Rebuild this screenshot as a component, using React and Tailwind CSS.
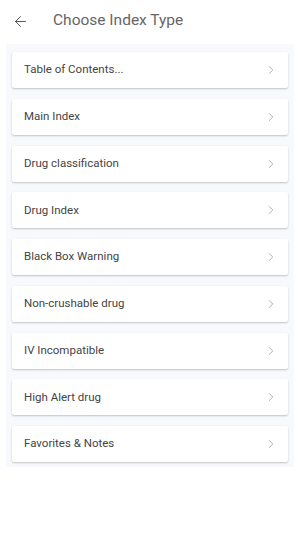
import { ArrowLeft, ChevronRight } from 'lucide-react';

const items = [
    'Table of Contents...',
    'Main Index',
    'Drug classification',
    'Drug Index',
    'Black Box Warning',
    'Non-crushable drug',
    'IV Incompatible',
    'High Alert drug',
    'Favorites & Notes',
];

export default function App() {
    return (
        <div className="w-[300px] h-[533px] bg-white font-['Roboto',sans-serif]">
            <header className="h-[42px] flex items-center">
                <ArrowLeft size={17} strokeWidth={1.4} className="ml-[12px] text-[#555]" />
                <h1 className="ml-[24px] text-[15.5px] font-normal text-[#666]">Choose Index Type</h1>
            </header>
            <div className="mx-[6px] mt-[2px] bg-[#f8f9fd] px-[6px] pt-[8px] pb-[5px] flex flex-col gap-[10.75px]">
                {items.map((label) => (
                    <div
                        key={label}
                        className="h-[36px] bg-white rounded-[2px] shadow-[0_1px_2px_rgba(0,0,0,0.22)] flex items-center justify-between pl-[12px] pr-[10px]"
                    >
                        <span className="text-[11.5px] font-normal text-[#444]">{label}</span>
                        <ChevronRight size={14} strokeWidth={1.4} className="text-[#9e9e9e]" />
                    </div>
                ))}
            </div>
        </div>
    );
}
